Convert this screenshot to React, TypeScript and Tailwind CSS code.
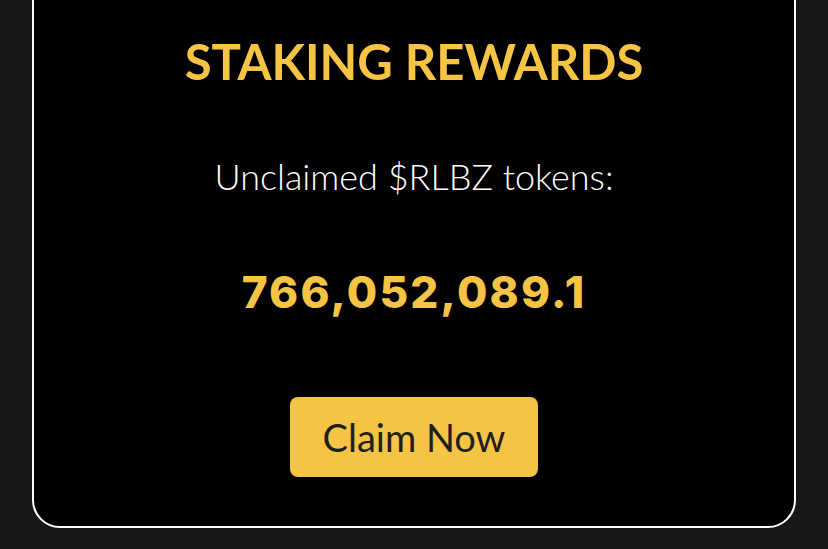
import React from "react";

export default function App() {
  return (
    <div className="min-h-[549px] w-full bg-[#181818] overflow-hidden pb-[21px]" style={{ fontFamily: "Lato, 'Noto Sans', sans-serif" }}>
      <div className="-mt-[26px] mx-[32px] rounded-[28px] border-2 border-white bg-black flex flex-col items-center pt-[61px] pb-[49px]">
        <h1 className="text-[49px] leading-[49px] font-bold text-[#F5C445]">STAKING REWARDS</h1>
        <p className="mt-[73px] text-[36px] leading-[35px] font-light text-white">Unclaimed $RLBZ tokens:</p>
        <p className="mt-[77px] text-[44px] leading-[43px] font-extrabold text-[#F5C445] tracking-[2.2px]" style={{ fontFamily: "Inter, sans-serif" }}>766,052,089.1</p>
        <button className="mt-[83px] w-[248px] h-[80px] rounded-[8px] bg-[#F5C445] text-[38px] leading-[38px] text-[#1f1f1f] font-normal">Claim Now</button>
      </div>
    </div>
  );
}
